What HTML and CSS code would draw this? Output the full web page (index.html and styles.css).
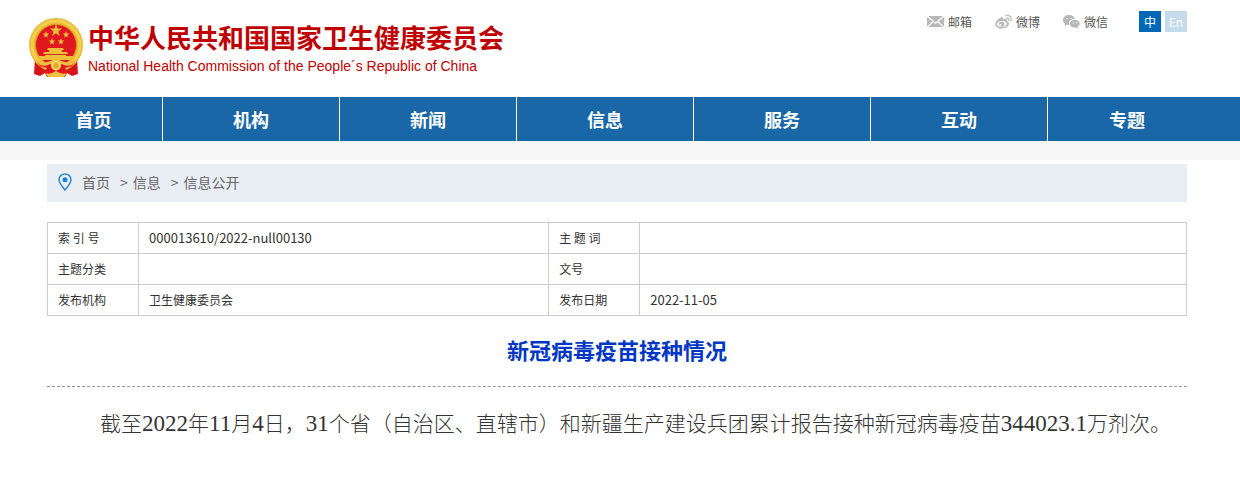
FILE: index.html
```html
<!DOCTYPE html>
<html lang="zh-CN">
<head>
<meta charset="utf-8">
<meta name="viewport" content="width=device-width, initial-scale=1">
<title>新冠病毒疫苗接种情况</title>
<link rel="stylesheet" href="styles.css">
</head>
<body>
<header class="header">
  <a class="brand" href="#">
    <svg class="emblem" viewBox="0 0 56 60" aria-hidden="true">
      <path d="M7 40 6 56 12 58 17 55 39 55 44 58 50 56 49 40Z" fill="#d8141c"/>
      <circle cx="28" cy="27" r="27" fill="#e9b93a"/>
      <circle cx="28" cy="27" r="24" fill="none" stroke="#f3cf4c" stroke-width="3"/>
      <circle cx="28" cy="27" r="20.500" fill="#e0171f" stroke="#d59520" stroke-width="1"/>
      <g fill="#f0bd3a">
        <path d="M28 6 29.500 10.500 34 10.600 30.400 13.400 31.700 18 28 15.300 24.300 18 25.600 13.400 22 10.600 26.500 10.500Z"/>
        <path d="M18 13 18.900 15.400 21.400 15.500 19.400 17.100 20.100 19.600 18 18.200 15.900 19.600 16.600 17.100 14.600 15.500 17.100 15.400Z"/>
        <path d="M38 13 38.900 15.400 41.400 15.500 39.400 17.100 40.100 19.600 38 18.200 35.900 19.600 36.600 17.100 34.600 15.500 37.100 15.400Z"/>
        <path d="M24 20 24.900 22.400 27.400 22.500 25.400 24.100 26.100 26.600 24 25.200 21.900 26.600 22.600 24.100 20.600 22.500 23.100 22.400Z"/>
        <path d="M33 20 33.900 22.400 36.400 22.500 34.400 24.100 35.100 26.600 33 25.200 30.900 26.600 31.600 24.100 29.600 22.500 32.100 22.400Z"/>
        <path d="M20 30H35L36 32H34V34H39L40 36H38V38H45V42H11V38H17V36H15L16 34H21V32H19Z"/>
      </g>
      <path d="M17 36.500H38" stroke="#c83418" stroke-width="1"/>
      <path d="M9 43Q28 49 47 43L44 48 37 50 40 54 37 59H19L16 54 19 50 12 48Z" fill="#e0171f"/>
      <path d="M7 41Q14 45 19 44L28 41 37 44Q42 45 49 41L44 47Q38 49 34 46L28 50 22 46Q18 49 12 47Z" fill="#efbd42"/>
      <circle cx="28" cy="47.500" r="4" fill="#e9a928" stroke="#f6d862" stroke-width="2"/>
      <path d="M17 55Q22 57 28 53 34 57 39 55L36 59H20Z" fill="#efc044"/>
    </svg>
    <span class="brand-text">
      <strong class="brand-name">中华人民共和国国家卫生健康委员会</strong>
      <span class="brand-sub">National Health Commission of the People´s Republic of China</span>
    </span>
  </a>
  <div class="tools">
    <a class="tool" href="#">
      <svg class="tool-icon" viewBox="0 0 17 17" aria-hidden="true"><path d="M1 3H16L8.500 9.500ZM0 4 5.500 8.500 0 13.500ZM17 4V13.500L11.500 8.500ZM6.500 9.300 8.500 11 10.500 9.300 16 14H1Z" fill="#b8b8b8"/></svg>
      邮箱
    </a>
    <a class="tool" href="#">
      <svg class="tool-icon" viewBox="0 0 17 17" aria-hidden="true">
        <path fill-rule="evenodd" d="M6.800 4.200C8.200 4 8.700 5 8.200 6.600 11 5.600 12.700 6.200 12 8.200 14.400 8.900 14.600 11.100 13 12.900 10.800 15.600 5 16.300 2 14.200-1 12.200.2 9.200 2.800 6.700 4.200 5.300 5.700 4.300 6.800 4.200ZM6.700 8C3.900 8.200 1.900 9.700 2 11.500 2.100 13.300 4.500 14.300 7.200 14 10 13.700 12 12.200 11.800 10.400 11.600 8.700 9.400 7.800 6.700 8Z" fill="#b8b8b8"/>
        <path fill-rule="evenodd" d="M6.500 8.800A2.800 2.500 0 1 0 6.600 13.800 2.800 2.500 0 0 0 6.500 8.800ZM5.500 11A1 1 0 1 1 5.400 13 1 1 0 0 1 5.500 11Z" fill="#b8b8b8"/>
        <path d="M10.800 2.400C14.400 1.300 17 4.600 15.800 7.900M11.300 4.900C13.200 4.400 14.200 5.800 13.600 7.400" fill="none" stroke="#b8b8b8" stroke-width="1.200" stroke-linecap="round"/>
      </svg>
      微博
    </a>
    <a class="tool" href="#">
      <svg class="tool-icon" viewBox="0 0 17 17" aria-hidden="true">
        <path d="M6 2C2.500 2 0 4.100 0 7 0 8.700.8 10 2.200 10.900L1.600 13 4.100 11.700 6.500 12C5 8.200 7.800 5.800 11.800 6 11.200 3.600 9 2 6 2Z" fill="#b8b8b8"/>
        <path d="M11.700 6.700C8.700 6.700 6.900 8.500 6.900 10.800 6.900 13.400 9.400 15 12.700 14.600L15 15.800 14.500 14C18.600 11.400 16.500 6.700 11.700 6.700Z" fill="#b8b8b8"/>
        <g fill="#fff"><circle cx="4" cy="5.600" r=".7"/><circle cx="8" cy="5.600" r=".7"/><circle cx="10.300" cy="9.700" r=".6"/><circle cx="13.600" cy="9.700" r=".6"/></g>
      </svg>
      微信
    </a>
    <div class="languages">
      <a class="lang lang-active" href="#">中</a>
      <a class="lang" href="#" lang="en">En</a>
    </div>
  </div>
</header>

<nav class="nav" aria-label="主导航">
  <a class="nav-item" href="#">首页</a>
  <a class="nav-item" href="#">机构</a>
  <a class="nav-item" href="#">新闻</a>
  <a class="nav-item" href="#">信息</a>
  <a class="nav-item" href="#">服务</a>
  <a class="nav-item" href="#">互动</a>
  <a class="nav-item" href="#">专题</a>
</nav>
<div class="band"></div>

<main class="content">
  <nav class="crumbs" aria-label="当前位置">
    <svg class="pin" viewBox="0 0 14 18" aria-hidden="true"><path d="M7 1C3.600 1 1 3.500 1 6.800 1 10.300 4.500 13.500 7 17 9.500 13.500 13 10.300 13 6.800 13 3.500 10.400 1 7 1Z" fill="none" stroke="#2c87d0" stroke-width="1.500"/><circle cx="7" cy="6.700" r="2.500" fill="#2080d0"/></svg>
    <a href="#">首页</a>
    <span class="sep">&gt;</span>
    <a href="#">信息</a>
    <span class="sep">&gt;</span>
    <a href="#">信息公开</a>
  </nav>

  <table class="meta">
    <colgroup><col class="col-label"><col class="col-value"><col class="col-label"><col></colgroup>
    <tbody>
      <tr><th scope="row">索 引 号</th><td><span class="code">000013610/2022-null00130</span></td><th scope="row">主 题 词</th><td></td></tr>
      <tr><th scope="row">主题分类</th><td></td><th scope="row">文号</th><td></td></tr>
      <tr><th scope="row">发布机构</th><td>卫生健康委员会</td><th scope="row">发布日期</th><td><span class="code">2022-11-05</span></td></tr>
    </tbody>
  </table>

  <article>
    <h1 class="title">新冠病毒疫苗接种情况</h1>
    <p class="body-text">截至<span class="num">2022</span>年<span class="num">11</span>月<span class="num">4</span>日，<span class="num">31</span>个省（自治区、直辖市）和新疆生产建设兵团累计报告接种新冠病毒疫苗<span class="num">344023.1</span>万剂次。</p>
  </article>
</main>
</body>
</html>
```
FILE: styles.css
```css
* {
  box-sizing: border-box;
}

body {
  margin: 0;
  background: #fff;
  color: #333;
  font: 12px/20px "Noto Sans CJK SC", sans-serif;
}

a {
  color: inherit;
  text-decoration: none;
}

.header {
  display: flex;
  justify-content: space-between;
  align-items: flex-start;
  min-height: 97px;
  padding: 11px 53px 0 28px;
}

.brand {
  display: flex;
  gap: 4px;
  padding-top: 7px;
  color: #c00000;
}

.emblem {
  width: 56px;
  height: 60px;
}

.brand-text {
  display: flex;
  flex-direction: column;
}

.brand-name {
  font-size: 26px;
  line-height: 38px;
}

.brand-sub {
  font: 14px/20px "Liberation Sans", sans-serif;
}

.tools {
  display: flex;
  align-items: center;
  gap: 23px;
  color: #555;
}

.tool {
  display: flex;
  align-items: center;
  gap: 4px;
}

.tool-icon {
  width: 17px;
  height: 17px;
}

.languages {
  display: flex;
  gap: 4px;
  margin-left: 8px;
}

.lang {
  width: 22px;
  background: #c4dbeb;
  color: #fff;
  line-height: 21px;
  text-align: center;
}

.lang-active {
  background: #0068b7;
}

.nav {
  display: grid;
  grid-template-columns: 138fr repeat(5, 177fr) 158fr;
  padding: 0 34px 0 25px;
  background: #1a67a8;
}

.nav-item {
  border-right: 1px solid #fff;
  color: #fff;
  font-size: 18px;
  font-weight: 700;
  line-height: 44px;
  text-align: center;
}

.nav-item:last-child {
  border-right: 0;
}

.band {
  height: 19px;
  background: #f7f7f7;
}

.content {
  padding: 4px 53px 40px 47px;
}

.crumbs {
  display: flex;
  align-items: center;
  min-height: 38px;
  padding: 0 11px 2px;
  background: #e9eef5;
  color: #666;
  font-size: 14px;
}

.pin {
  width: 14px;
  height: 18px;
  margin-right: 10px;
}

.sep {
  margin: 0 5px 0 10px;
}

.meta {
  width: 100%;
  margin-top: 20px;
  border-collapse: collapse;
  table-layout: fixed;
}

.col-label {
  width: 8%;
}

.col-value {
  width: 36%;
}

.meta th,
.meta td {
  height: 31px;
  padding: 5px 10px;
  border: 1px solid #ccc;
  font-weight: 400;
  text-align: left;
}

.code {
  font-size: 13px;
}

.title {
  margin: 0;
  padding: 15px 0 18px;
  border-bottom: 1px dashed #999;
  color: #0237c6;
  font-size: 22px;
  line-height: 37px;
  text-align: center;
}

.body-text {
  margin: 19px 0 0;
  padding-left: 53px;
  font-size: 21px;
  font-weight: 300;
  line-height: 32px;
}

.num {
  font-family: "Liberation Serif", serif;
  font-size: 23px;
}
```
